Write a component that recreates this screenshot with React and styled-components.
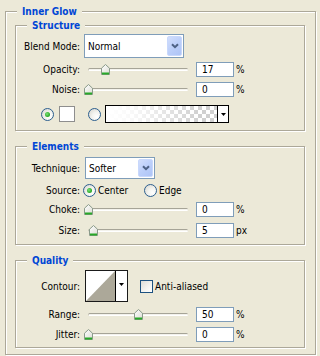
import React from 'react';
import styled, { createGlobalStyle } from 'styled-components';

const GlobalStyle = createGlobalStyle`
  html, body {
    margin: 0;
    padding: 0;
    background: #ece9d8;
  }
  body {
    font-family: "DejaVu Sans Condensed", "DejaVu Sans", sans-serif;
    font-stretch: condensed;
    font-size: 10px;
    color: #000;
  }
`;

const Page = styled.div`
  width: 320px;
  height: 356px;
  box-sizing: border-box;
  padding: 5px 0 0 5px;
  overflow: hidden;
`;

const Group = styled.fieldset`
  box-sizing: border-box;
  min-width: 0;
  width: ${p => p.$w}px;
  margin: 0 ${p => p.$mx || 0}px ${p => p.$mb || 0}px;
  padding: ${p => p.$pt || 0}px 0 ${p => p.$pb || 0}px;
  border: 1px solid #aca899;
  box-shadow: inset 1px 1px #fff, 1px 1px #fff;
`;

const Legend = styled.legend`
  margin-left: 11px;
  padding: 0 5px;
  line-height: 13px;
  font-weight: bold;
  color: #0046d5;
  background: #ece9d8;
`;

const Row = styled.div`
  display: flex;
  align-items: center;
  height: ${p => p.$h}px;
  margin-top: ${p => p.$mt}px;
`;

const Label = styled.span`
  flex: none;
  width: 64px;
  text-align: right;
  white-space: nowrap;
`;

const Select = styled.div`
  flex: none;
  display: flex;
  align-items: stretch;
  box-sizing: border-box;
  margin-left: ${p => p.$ml}px;
  width: ${p => p.$w}px;
  height: ${p => p.$h}px;
  padding: 1px;
  border: 1px solid #7f9db9;
  background: #fff;
`;

const SelectText = styled.span`
  flex: 1;
  display: flex;
  align-items: center;
  padding-left: 2px;
`;

const SelectButton = styled.span`
  flex: none;
  display: flex;
  align-items: center;
  justify-content: center;
  width: 15px;
  box-sizing: border-box;
  border: 1px solid #c8d8fc;
  border-radius: 2px;
  background: linear-gradient(135deg, #d2defc 0%, #bccffa 50%, #aec4f6 100%);
`;

const SliderBox = styled.div`
  position: relative;
  flex: none;
  width: 100px;
  height: 11px;
  margin: 0 8px;
`;

const Track = styled.div`
  position: absolute;
  left: 0;
  right: 0;
  top: 4px;
  height: 3px;
  box-sizing: border-box;
  border-radius: 2px;
  border-top: 1px solid #a6a497;
  border-left: 1px solid #c6c4b6;
  background: #f3f2ec;
  border-bottom: 1px solid #fff;
`;

const Thumb = styled.svg`
  position: absolute;
  top: 0;
  width: 9px;
  height: 11px;
`;

const NumBox = styled.div`
  flex: none;
  width: 38px;
  height: 15px;
  box-sizing: border-box;
  padding-left: 5px;
  line-height: 13px;
  border: 1px solid #7f9db9;
  background: #fff;
`;

const Unit = styled.span`
  margin-left: 2px;
`;

const Radio = styled.span`
  position: relative;
  flex: none;
  width: 13px;
  height: 13px;
  box-sizing: border-box;
  margin-left: ${p => p.$ml || 0}px;
  border: 1px solid #2c5f8f;
  border-radius: 50%;
  background: radial-gradient(circle at 70% 70%, #ffffff 0%, #f4f4f0 40%, #d4d3cc 100%);

  &::after {
    content: '';
    display: ${p => (p.$checked ? 'block' : 'none')};
    position: absolute;
    left: 3px;
    top: 3px;
    width: 5px;
    height: 5px;
    border-radius: 50%;
    background: radial-gradient(circle at 40% 40%, #7de07a 0%, #2fae2c 60%, #1f8a1d 100%);
  }
`;

const Choice = styled.span`
  flex: none;
  width: ${p => p.$w}px;
  margin-left: 2px;
`;

const Swatch = styled.span`
  flex: none;
  width: 16px;
  height: 16px;
  box-sizing: border-box;
  margin-left: 5px;
  border: 1px solid #8e8e8e;
  background: #fff;
`;

const GradientPicker = styled.div`
  flex: none;
  display: flex;
  width: 124px;
  height: 18px;
  box-sizing: border-box;
  margin-left: 4px;
  border: 1px solid #000;
`;

const GradientFill = styled.span`
  flex: 1;
  background:
    linear-gradient(to right, #fff 0%, rgba(255, 255, 255, 0.85) 25%, rgba(255, 255, 255, 0) 85%),
    conic-gradient(#d0d0d0 25%, #fff 0 50%, #d0d0d0 0 75%, #fff 0) 0 0 / 8px 8px;
`;

const ArrowPart = styled.span`
  flex: none;
  display: flex;
  align-items: center;
  justify-content: center;
  width: ${p => p.$w}px;
  padding-bottom: ${p => p.$lift || 0}px;
  box-sizing: border-box;
  border-left: 1px solid #000;
  background: #fff;
`;

const ContourBox = styled.div`
  flex: none;
  display: flex;
  width: 43px;
  height: 32px;
  box-sizing: border-box;
  margin-left: 5px;
  border: 1px solid #1a1a1a;
  background: #fff;
`;

const ContourPreview = styled.svg`
  flex: none;
  width: 29px;
  height: 30px;
`;

const Checkbox = styled.span`
  flex: none;
  width: 13px;
  height: 13px;
  box-sizing: border-box;
  margin-left: 12px;
  border: 1px solid #1c5180;
  background: linear-gradient(135deg, #dcdcd7 0%, #f4f4f1 60%, #fff 100%);
`;

const CheckText = styled.span`
  margin-left: 2px;
`;

const Chevron = () => (
  <svg width="8" height="6" viewBox="0 0 8 6">
    <path d="M1 1.2 L4 4.2 L7 1.2" fill="none" stroke="#4d6185" strokeWidth="2" />
  </svg>
);

const DownArrow = () => (
  <svg width="5" height="3" viewBox="0 0 5 3">
    <path d="M0 0 H5 L2.5 3 Z" fill="#000" />
  </svg>
);

const Slider = ({ value }) => (
  <SliderBox>
    <Track />
    <Thumb viewBox="0 0 9 11" style={{ left: value - 4.5 }}>
      <defs>
        <linearGradient id="thumbFill" x1="0" y1="0" x2="1" y2="1">
          <stop offset="0" stopColor="#ffffff" />
          <stop offset="1" stopColor="#dcdcd4" />
        </linearGradient>
      </defs>
      <path d="M0.5 4.2 L4.5 0.5 L8.5 4.2 V10.5 H0.5 Z" fill="url(#thumbFill)" stroke="#8a9a8a" />
      <rect x="1" y="8.5" width="7" height="2" fill="#28a828" />
    </Thumb>
  </SliderBox>
);

const SliderRow = ({ label, value, unit, mt }) => (
  <Row $h={15} $mt={mt}>
    <Label>{label}</Label>
    <Slider value={value} />
    <NumBox>{value}</NumBox>
    <Unit>{unit}</Unit>
  </Row>
);

const App = () => (
  <Page>
    <GlobalStyle />
    <Group $w={311} $pt={1} $pb={6}>
      <Legend>Inner Glow</Legend>

      <Group $w={290} $mx={9} $mb={9} $pb={7}>
        <Legend>Structure</Legend>
        <Row $h={24} $mt={2}>
          <Label>Blend Mode:</Label>
          <Select $ml={4} $w={100} $h={24}>
            <SelectText>Normal</SelectText>
            <SelectButton><Chevron /></SelectButton>
          </Select>
        </Row>
        <SliderRow label="Opacity:" value={17} unit="%" mt={4} />
        <SliderRow label="Noise:" value={0} unit="%" mt={5} />
        <Row $h={18} $mt={8}>
          <Radio $ml={25} $checked />
          <Swatch />
          <Radio $ml={13} />
          <GradientPicker>
            <GradientFill />
            <ArrowPart $w={11}><DownArrow /></ArrowPart>
          </GradientPicker>
        </Row>
      </Group>

      <Group $w={290} $mx={9} $mb={9} $pb={6}>
        <Legend>Elements</Legend>
        <Row $h={22} $mt={4}>
          <Label>Technique:</Label>
          <Select $ml={5} $w={70} $h={22}>
            <SelectText>Softer</SelectText>
            <SelectButton><Chevron /></SelectButton>
          </Select>
        </Row>
        <Row $h={13} $mt={5}>
          <Label>Source:</Label>
          <Radio $ml={3} $checked />
          <Choice $w={46}>Center</Choice>
          <Radio />
          <Choice $w={40}>Edge</Choice>
        </Row>
        <SliderRow label="Choke:" value={0} unit="%" mt={5} />
        <SliderRow label="Size:" value={5} unit="px" mt={6} />
      </Group>

      <Group $w={290} $mx={9} $pb={5}>
        <Legend>Quality</Legend>
        <Row $h={32} $mt={3}>
          <Label>Contour:</Label>
          <ContourBox>
            <ContourPreview viewBox="0 0 29 30">
              <polygon points="0,30 29,0 29,30" fill="#aca899" />
            </ContourPreview>
            <ArrowPart $w={11} $lift={4}><DownArrow /></ArrowPart>
          </ContourBox>
          <Checkbox />
          <CheckText>Anti-aliased</CheckText>
        </Row>
        <SliderRow label="Range:" value={50} unit="%" mt={5} />
        <SliderRow label="Jitter:" value={0} unit="%" mt={5} />
      </Group>
    </Group>
  </Page>
);

export default App;
